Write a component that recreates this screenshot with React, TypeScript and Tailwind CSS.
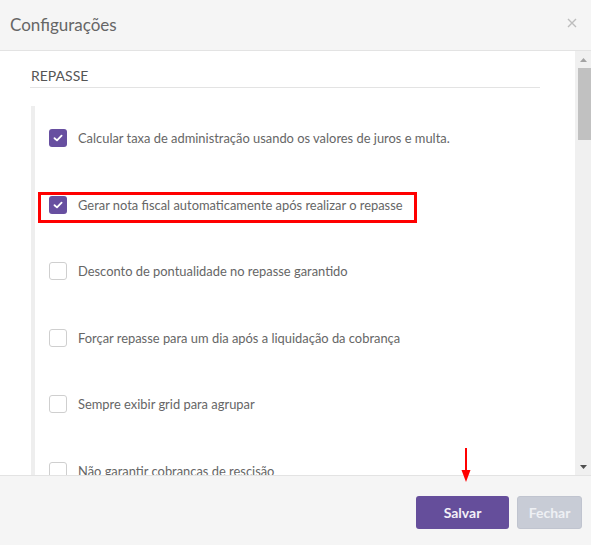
import React from "react";

const items = [
  { label: "Calcular taxa de administração usando os valores de juros e multa.", checked: true },
  { label: "Gerar nota fiscal automaticamente após realizar o repasse", checked: true, highlight: true },
  { label: "Desconto de pontualidade no repasse garantido", checked: false },
  { label: "Forçar repasse para um dia após a liquidação da cobrança", checked: false },
  { label: "Sempre exibir grid para agrupar", checked: false },
  { label: "Não garantir cobrancas de rescisão", checked: false },
];

function Box({ checked }: { checked: boolean }) {
  if (checked) {
    return (
      <span className="flex h-[18px] w-[18px] shrink-0 items-center justify-center rounded-[3px] bg-[#674fa0]">
        <svg width="10" height="8" viewBox="0 0 10 8">
          <path d="M1.5 4.2 L4 6.4 L8.6 1.6" fill="none" stroke="white" strokeWidth="1.8" strokeLinecap="round" strokeLinejoin="round" />
        </svg>
      </span>
    );
  }
  return <span className="h-[18px] w-[18px] shrink-0 rounded-[3px] border border-[#cfcfcf] bg-white" />;
}

export default function App() {
  return (
    <div className="relative flex h-[545px] w-[591px] flex-col overflow-hidden bg-white" style={{ fontFamily: "Lato, 'Open Sans', sans-serif" }}>
      {/* header */}
      <div className="flex h-[51px] shrink-0 items-center justify-between border-b border-[#e3e3e3] bg-[#f5f5f5] pl-[10px] pr-[14px]">
        <span className="pb-[2px] text-[17px] leading-none text-[#666]">Configurações</span>
        <svg width="10" height="10" viewBox="0 0 10 10" className="mb-[4px]">
          <path d="M1 1 L9 9 M9 1 L1 9" stroke="#bdbdbd" strokeWidth="1.4" />
        </svg>
      </div>

      {/* body */}
      <div className="flex min-h-0 flex-1">
        <div className="min-w-0 flex-1 overflow-hidden pl-[30px] pr-[35px]">
          <div className="border-b border-[#e3e3e3] pt-[17px] pb-[3px] pl-[1px] text-[14px] leading-[16px] text-[#555]">REPASSE</div>
          <div className="mt-[18px] ml-[1px] border-l-[4px] border-[#eeeeee] pl-[14px] pt-[23px]">
            {items.map((it, i) => (
              <div key={i} className="relative flex h-[66.5px] items-start gap-[11px]">
                {it.highlight && (
                  <div className="pointer-events-none absolute left-[-11px] top-[-4px] h-[31px] w-[379px] border-[3px] border-[#f00]" />
                )}
                <Box checked={it.checked} />
                <span className="text-[12.9px] leading-[18px] text-[#666]">{it.label}</span>
              </div>
            ))}
          </div>
        </div>
        {/* scrollbar */}
        <div className="flex w-[16px] shrink-0 flex-col items-center bg-[#f0f0f0] pt-[7px] pb-[6px]">
          <svg width="7" height="4" viewBox="0 0 7 4"><path d="M0 4 L3.5 0 L7 4Z" fill="#a3a3a3" /></svg>
          <div className="mt-[6px] h-[72px] w-[13px] self-end bg-[#c1c1c1]" />
          <div className="flex-1" />
          <svg width="7" height="4" viewBox="0 0 7 4"><path d="M0 0 L7 0 L3.5 4Z" fill="#505050" /></svg>
        </div>
      </div>

      {/* footer */}
      <div className="flex h-[70px] shrink-0 items-start justify-end gap-[8px] border-t border-[#e3e3e3] bg-[#f5f5f5] pr-[9px] pt-[20px]">
        <button className="h-[33px] w-[93px] rounded-[3px] bg-[#654e9b] text-[14px] font-bold text-[#f3f0f8]">Salvar</button>
        <button className="h-[33px] w-[65px] rounded-[3px] border border-[#c0c4cf] bg-[#c8ccd6] text-[14px] font-bold text-[#eef0f4]">Fechar</button>
      </div>

      {/* red arrow annotation */}
      <svg className="pointer-events-none absolute left-[459px] top-[448px]" width="14" height="36" viewBox="0 0 14 36">
        <path d="M7 0 L7 24" stroke="#f00" strokeWidth="2" />
        <path d="M2.5 22 L11.5 22 L7 34 Z" fill="#f00" />
      </svg>
    </div>
  );
}
